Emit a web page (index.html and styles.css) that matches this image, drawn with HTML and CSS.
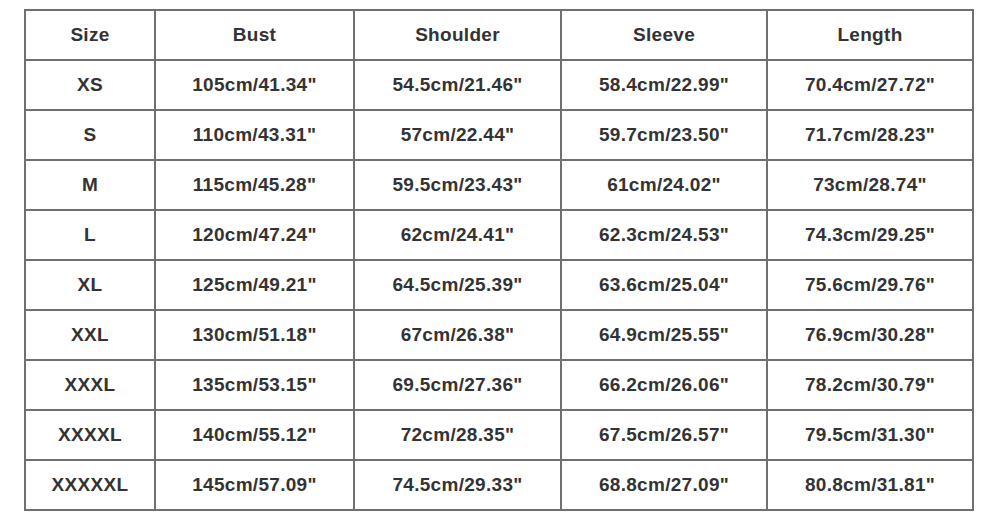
FILE: index.html
```html
<!DOCTYPE html>
<html>
<head>
<meta charset="utf-8">
<link rel="stylesheet" href="styles.css">
</head>
<body>
<div class="chart">
  <div class="cell">Size</div><div class="cell">Bust</div><div class="cell">Shoulder</div><div class="cell">Sleeve</div><div class="cell">Length</div>
  <div class="cell">XS</div><div class="cell">105cm/41.34"</div><div class="cell">54.5cm/21.46"</div><div class="cell">58.4cm/22.99"</div><div class="cell">70.4cm/27.72"</div>
  <div class="cell">S</div><div class="cell">110cm/43.31"</div><div class="cell">57cm/22.44"</div><div class="cell">59.7cm/23.50"</div><div class="cell">71.7cm/28.23"</div>
  <div class="cell">M</div><div class="cell">115cm/45.28"</div><div class="cell">59.5cm/23.43"</div><div class="cell">61cm/24.02"</div><div class="cell">73cm/28.74"</div>
  <div class="cell">L</div><div class="cell">120cm/47.24"</div><div class="cell">62cm/24.41"</div><div class="cell">62.3cm/24.53"</div><div class="cell">74.3cm/29.25"</div>
  <div class="cell">XL</div><div class="cell">125cm/49.21"</div><div class="cell">64.5cm/25.39"</div><div class="cell">63.6cm/25.04"</div><div class="cell">75.6cm/29.76"</div>
  <div class="cell">XXL</div><div class="cell">130cm/51.18"</div><div class="cell">67cm/26.38"</div><div class="cell">64.9cm/25.55"</div><div class="cell">76.9cm/30.28"</div>
  <div class="cell">XXXL</div><div class="cell">135cm/53.15"</div><div class="cell">69.5cm/27.36"</div><div class="cell">66.2cm/26.06"</div><div class="cell">78.2cm/30.79"</div>
  <div class="cell">XXXXL</div><div class="cell">140cm/55.12"</div><div class="cell">72cm/28.35"</div><div class="cell">67.5cm/26.57"</div><div class="cell">79.5cm/31.30"</div>
  <div class="cell">XXXXXL</div><div class="cell">145cm/57.09"</div><div class="cell">74.5cm/29.33"</div><div class="cell">68.8cm/27.09"</div><div class="cell">80.8cm/31.81"</div>
</div>
</body>
</html>
```
FILE: styles.css
```css
html, body {
  margin: 0;
  padding: 0;
  background: #ffffff;
}
.chart {
  margin: 9px 0 0 24px;
  display: grid;
  grid-template-columns: 128px 197px 205px 204px 204px;
  grid-auto-rows: 48px;
  gap: 2px;
  padding: 2px;
  background: #707070;
  width: max-content;
}
.cell {
  background: #ffffff;
  display: flex;
  align-items: center;
  justify-content: center;
  font-family: "Liberation Sans", Arial, sans-serif;
  font-weight: bold;
  font-size: 19px;
  letter-spacing: 0.3px;
  color: #333333;
}
```
